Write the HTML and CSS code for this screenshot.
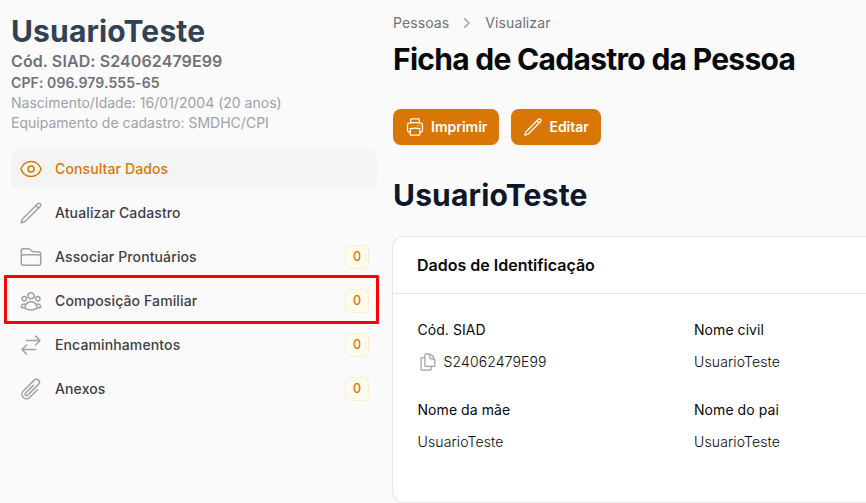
FILE: index.html
```html
<!DOCTYPE html>
<html lang="pt-BR">
<head>
<meta charset="utf-8">
<title>Ficha de Cadastro da Pessoa</title>
<link rel="stylesheet" href="styles.css">
</head>
<body>
<div class="layout">
  <aside class="sidebar">
    <header class="profile">
      <h2 class="profile-name">UsuarioTeste</h2>
      <p class="profile-code">Cód. SIAD: S24062479E99</p>
      <p class="profile-cpf">CPF: 096.979.555-65</p>
      <p class="profile-meta">Nascimento/Idade: 16/01/2004 (20 anos)</p>
      <p class="profile-meta">Equipamento de cadastro: SMDHC/CPI</p>
    </header>
    <nav class="menu">
      <a class="item active">
        <svg class="icon" viewBox="0 0 24 24"><path d="M2.036 12.322a1.012 1.012 0 010-.639C3.423 7.51 7.36 4.5 12 4.5c4.638 0 8.573 3.007 9.963 7.178.07.207.07.431 0 .639C20.577 16.49 16.64 19.5 12 19.5c-4.638 0-8.573-3.007-9.963-7.178z"/><path d="M15 12a3 3 0 11-6 0 3 3 0 016 0z"/></svg>
        <span class="label">Consultar Dados</span>
      </a>
      <a class="item">
        <svg class="icon" viewBox="0 0 24 24"><path d="M16.862 4.487l1.687-1.688a1.875 1.875 0 112.652 2.652L6.832 19.82a4.5 4.5 0 01-1.897 1.13l-2.685.8.8-2.685a4.5 4.5 0 011.13-1.897L16.863 4.487zm0 0L19.5 7.125"/></svg>
        <span class="label">Atualizar Cadastro</span>
      </a>
      <a class="item">
        <svg class="icon" viewBox="0 0 24 24"><path d="M2.25 12.75V12A2.25 2.25 0 014.5 9.75h15A2.25 2.25 0 0121.75 12v.75m-8.69-6.44l-2.12-2.12a1.5 1.5 0 00-1.061-.44H4.5A2.25 2.25 0 002.25 6v12a2.25 2.25 0 002.25 2.25h15A2.25 2.25 0 0021.75 18V9a2.25 2.25 0 00-2.25-2.25h-5.379a1.5 1.5 0 01-1.06-.44z"/></svg>
        <span class="label">Associar Prontuários</span><span class="badge">0</span>
      </a>
      <a class="item marked">
        <svg class="icon" viewBox="0 0 24 24"><path d="M18 18.72a9.094 9.094 0 003.741-.479 3 3 0 00-4.682-2.72m.94 3.198l.001.031c0 .225-.012.447-.037.666A11.944 11.944 0 0112 21c-2.17 0-4.207-.576-5.963-1.584A6.062 6.062 0 016 18.719m12 0a5.971 5.971 0 00-.941-3.197m0 0A5.995 5.995 0 0012 12.75a5.995 5.995 0 00-5.058 2.772m0 0a3 3 0 00-4.681 2.72 8.986 8.986 0 003.74.477m.94-3.197a5.971 5.971 0 00-.94 3.197M15 6.75a3 3 0 11-6 0 3 3 0 016 0zm6 3a2.25 2.25 0 11-4.5 0 2.25 2.25 0 014.5 0zm-13.5 0a2.25 2.25 0 11-4.5 0 2.25 2.25 0 014.5 0z"/></svg>
        <span class="label">Composição Familiar</span><span class="badge">0</span>
      </a>
      <a class="item">
        <svg class="icon" viewBox="0 0 24 24"><path d="M7.5 21L3 16.5m0 0L7.5 12M3 16.5h13.5m0-13.5L21 7.5m0 0L16.5 12M21 7.5H7.5"/></svg>
        <span class="label">Encaminhamentos</span><span class="badge">0</span>
      </a>
      <a class="item">
        <svg class="icon" viewBox="0 0 24 24"><path d="M18.375 12.739l-7.693 7.693a4.5 4.5 0 01-6.364-6.364l10.94-10.94A3 3 0 1119.5 7.372L8.552 18.32m.009-.01l-.01.01m5.699-9.941l-7.81 7.81a1.5 1.5 0 002.112 2.13"/></svg>
        <span class="label">Anexos</span><span class="badge">0</span>
      </a>
    </nav>
  </aside>
  <main class="content">
    <nav class="crumbs">
      <span>Pessoas</span>
      <svg class="chevron" viewBox="0 0 20 20"><path d="M7.7 5.7 12 10l-4.3 4.3"/></svg>
      <span>Visualizar</span>
    </nav>
    <h1 class="title">Ficha de Cadastro da Pessoa</h1>
    <div class="actions">
      <button class="button"><svg class="button-icon" viewBox="0 0 24 24"><path d="M6.72 13.829c-.24.03-.48.062-.72.096m.72-.096a42.415 42.415 0 0110.56 0m-10.56 0L6.34 18m10.94-4.171c.24.03.48.062.72.096m-.72-.096L17.66 18m0 0l.229 2.523a1.125 1.125 0 01-1.12 1.227H7.231c-.662 0-1.18-.568-1.12-1.227L6.34 18m11.318 0h1.091A2.25 2.25 0 0021 15.75V9.456c0-1.081-.768-2.015-1.837-2.175a48.055 48.055 0 00-1.913-.247M6.34 18H5.25A2.25 2.25 0 013 15.75V9.456c0-1.081.768-2.015 1.837-2.175a48.041 48.041 0 011.913-.247m10.5 0a48.536 48.536 0 00-10.5 0m10.5 0V3.375c0-.621-.504-1.125-1.125-1.125h-8.25c-.621 0-1.125.504-1.125 1.125v3.659M18 10.5h.008v.008H18V10.5zm-3 0h.008v.008H15V10.5z"/></svg>Imprimir</button>
      <button class="button"><svg class="button-icon" viewBox="0 0 24 24"><path d="M16.862 4.487l1.687-1.688a1.875 1.875 0 112.652 2.652L6.832 19.82a4.5 4.5 0 01-1.897 1.13l-2.685.8.8-2.685a4.5 4.5 0 011.13-1.897L16.863 4.487zm0 0L19.5 7.125"/></svg>Editar</button>
    </div>
    <h2 class="person">UsuarioTeste</h2>
    <section class="card">
      <h3 class="card-title">Dados de Identificação</h3>
      <dl class="fields">
        <div class="field"><dt>Cód. SIAD</dt><dd><svg class="copy" viewBox="0 0 24 24"><path d="M15.75 17.25v3.375c0 .621-.504 1.125-1.125 1.125h-9.75a1.125 1.125 0 01-1.125-1.125V7.875c0-.621.504-1.125 1.125-1.125H6.75a9.06 9.06 0 011.5.124m7.5 10.376h3.375c.621 0 1.125-.504 1.125-1.125V11.25c0-4.46-3.243-8.161-7.5-8.876a9.06 9.06 0 00-1.5-.124H9.375c-.621 0-1.125.504-1.125 1.125v3.5m7.5 10.375H9.375a1.125 1.125 0 01-1.125-1.125v-9.25m12 6.625v-1.875a3.375 3.375 0 00-3.375-3.375h-1.5a1.125 1.125 0 01-1.125-1.125v-1.5a3.375 3.375 0 00-3.375-3.375H9.75"/></svg>S24062479E99</dd></div>
        <div class="field"><dt>Nome civil</dt><dd>UsuarioTeste</dd></div>
        <div class="field"><dt>Nome da mãe</dt><dd>UsuarioTeste</dd></div>
        <div class="field"><dt>Nome do pai</dt><dd>UsuarioTeste</dd></div>
      </dl>
    </section>
  </main>
</div>
</body>
</html>
```
FILE: styles.css
```css
* { box-sizing: border-box; margin: 0; padding: 0; }
body { background: #fafafa; font-family: Inter, "Liberation Sans", sans-serif; font-size: 14px; line-height: 20px; }
.layout { display: grid; grid-template-columns: 366px 1fr; column-gap: 15px; height: 503px; padding-left: 11px; }
.profile { padding-top: 11px; }
.profile-name { font-size: 30px; line-height: 40px; font-weight: 700; color: #334155; letter-spacing: 0.15px; }
.profile-code { font-size: 16px; font-weight: 600; color: #71717a; line-height: 20px; letter-spacing: 0.11px; }
.profile-cpf { margin-top: 2px; font-weight: 600; color: #71717a; letter-spacing: 0.1px; }
.profile-meta { color: #a1a1aa; letter-spacing: 0.01px; }
.menu { display: flex; flex-direction: column; gap: 4px; padding-top: 16px; }
.item { position: relative; display: flex; align-items: center; gap: 12px; height: 40px; padding: 0 8px; border-radius: 8px; color: #3f3f46; font-weight: 500; letter-spacing: 0.12px; }
.active { background: #f4f4f5; color: #d97706; }
.icon { width: 24px; height: 24px; color: #a1a1aa; }
.active .icon { color: #d97706; }
svg { fill: none; stroke: currentColor; stroke-width: 1.5; stroke-linecap: round; stroke-linejoin: round; flex: none; }
.label { flex: 1; }
.badge { width: 24px; height: 24px; border: 1px solid #fcecd2; border-radius: 6px; background: #fffbeb; color: #d97706; font-size: 12.5px; font-weight: 450; line-height: 22px; text-align: center; }
.marked::after { content: ""; position: absolute; inset: -6px -2px -3px -7px; border: 3px solid #f00; border-radius: 1px; }
.content { padding-top: 13px; }
.crumbs { display: flex; align-items: center; gap: 8px; color: #71717a; padding-left: 1px; letter-spacing: 0.1px; }
.chevron { width: 20px; height: 20px; color: #a1a1aa; }
.title { margin-top: 8px; padding-left: 1px; font-size: 30px; line-height: 36px; font-weight: 700; letter-spacing: -0.71px; color: #09090b; }
.actions { display: flex; gap: 12px; margin: 32px 0 0 1px; }
.button { display: flex; align-items: center; gap: 6px; height: 36px; padding: 0 12px; border: 0; border-radius: 8px; background: #d97706; color: #fff; font: 600 14px/20px Inter, sans-serif; box-shadow: 0 1px 2px rgb(0 0 0 / 5%); }
.button-icon { width: 20px; height: 20px; }
.person { margin: 32px 0 0 1px; font-size: 30px; line-height: 36px; font-weight: 650; color: #0f172a; letter-spacing: 0.18px; }
.card { height: 267px; margin-top: 23px; border: 1px solid #e6e6e7; border-right: 0; border-radius: 12px 0 0 12px; background: #fff; color: #09090b; }
.card-title { height: 57px; padding: 16px 24px; border-bottom: 1px solid #e4e4e7; font-size: 16px; line-height: 24px; font-weight: 600; }
.fields { display: grid; grid-template-columns: 252.5px 1fr; gap: 24px; padding: 24px 24px 24px 24.5px; }
.field { height: 56px; }
.field dt { line-height: 24px; font-weight: 420; letter-spacing: 0.06px; }
.field dd { display: flex; align-items: center; gap: 6px; height: 24px; margin-top: 8px; font-weight: 350; letter-spacing: 0.13px; }
.copy { width: 20px; height: 20px; color: #a1a1aa; }
```
